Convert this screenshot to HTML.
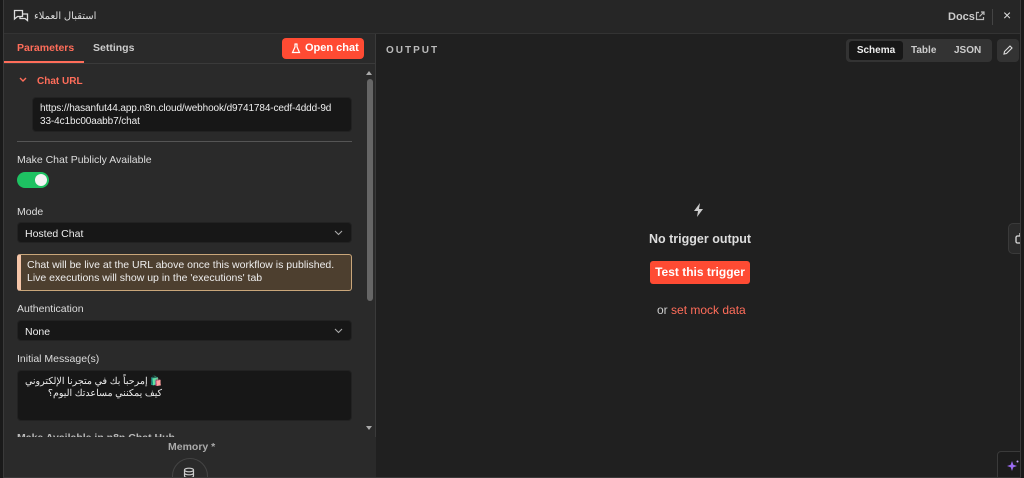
<!DOCTYPE html>
<html><head><meta charset="utf-8"><style>
*{box-sizing:border-box;margin:0;padding:0}
body{width:1024px;height:478px;overflow:hidden;background:#1a1a1a;font-family:"Liberation Sans","Noto Sans CJK SC",sans-serif;color:#ddd;position:relative;font-size:11px}
.modal{position:absolute;left:3px;top:0;width:1018px;height:478px;border:1px solid #3a3a3a;border-top:none;background:#202020;overflow:hidden}
.hdr{position:absolute;left:0;top:0;width:100%;height:34px;background:#262626;border-bottom:1px solid #333}
.left{position:absolute;left:0;top:34px;width:372px;height:444px;background:#2a2a2a;border-right:1px solid #3a3a3a}
.abs{position:absolute}
.lbl{position:absolute;left:13px;font-size:10.5px;color:#ddd}
.inp{position:absolute;left:13px;width:335px;background:#171717;border-radius:4px;border:1px solid #222}
.chev{position:absolute;right:8px;top:7px}
</style></head><body>
<div class="modal">
 <div class="hdr">
  <svg class="abs" style="left:9px;top:9px" width="16" height="15" viewBox="0 0 16 15" fill="none" stroke="#ddd" stroke-width="1.3"><path d="M1.5 1.5h8v6h-5l-3 2.5z"/><path d="M9.5 5h5v6.5l-2.5-2H7v-2"/></svg>
  <div class="abs" style="left:30px;top:11px;font-size:10px;color:#ddd">استقبال العملاء</div>
  <div class="abs" style="left:944px;top:11px;font-size:11px;color:#ccc;font-weight:bold">Docs</div>
  <svg class="abs" style="left:971px;top:11px" width="10" height="10" viewBox="0 0 10 10" fill="none" stroke="#bbb" stroke-width="1.2"><path d="M4 1.5H1.5v7h7V6M6 1h3v3M9 1L4.5 5.5"/></svg>
  <div class="abs" style="left:988px;top:9px;width:1px;height:16px;background:#444"></div>
  <div class="abs" style="left:999px;top:7px;font-size:14px;color:#ddd">×</div>
 </div>
 <div class="left">
  <div class="abs" style="left:13px;top:8px;font-size:10.5px;color:#ff6d5a;font-weight:bold">Parameters</div>
  <div class="abs" style="left:89px;top:8px;font-size:10.5px;color:#ccc;font-weight:bold">Settings</div>
  <div class="abs" style="left:0;top:27px;width:80px;height:2px;background:#ff6d5a"></div>
  <div class="abs" style="left:0;top:29px;width:372px;height:1px;background:#3a3a3a"></div>
  <div class="abs" style="left:278px;top:4px;width:82px;height:21px;background:#ff4b33;border-radius:4px;color:#fff;font-weight:bold;font-size:11px;line-height:21px;padding-left:23px">Open chat</div>
  <svg class="abs" style="left:287px;top:9px" width="10" height="11" viewBox="0 0 10 11" fill="none" stroke="#fff" stroke-width="1.2"><path d="M3.5 1h3M4 1v3L1.5 9.5h7L6 4V1"/></svg>
  <svg class="abs" style="left:15px;top:43px" width="8" height="6" viewBox="0 0 8 6" fill="none" stroke="#ff6d5a" stroke-width="1.4"><path d="M1 1l3 3 3-3"/></svg>
  <div class="abs" style="left:33px;top:42px;color:#ff6d5a;font-weight:bold;font-size:10px">Chat URL</div>
  <div class="inp" style="left:28px;top:63px;width:320px;height:35px;font-size:10px;color:#eee;padding:4px 7px;line-height:13px;white-space:nowrap;letter-spacing:-0.1px">https://hasanfut44.app.n8n.cloud/webhook/d9741784-cedf-4ddd-9d<br>33-4c1bc00aabb7/chat</div>
  <div class="abs" style="left:13px;top:107px;width:335px;height:1px;background:#555"></div>
  <div class="lbl" style="top:120px">Make Chat Publicly Available</div>
  <div class="abs" style="left:13px;top:138px;width:32px;height:16px;border-radius:8px;background:#1ec262"></div>
  <div class="abs" style="left:31px;top:140px;width:12px;height:12px;border-radius:6px;background:#f4f4f4"></div>
  <div class="lbl" style="top:172px">Mode</div>
  <div class="inp" style="top:188px;height:21px;padding:5px 7px;color:#eee;font-size:10.5px">Hosted Chat<svg class="chev" width="9" height="6" viewBox="0 0 9 6" fill="none" stroke="#aaa" stroke-width="1.1"><path d="M1 1l3.5 3.5L8 1"/></svg></div>
  <div class="abs" style="left:13px;top:220px;width:335px;height:37px;background:#4d3f2f;border:1px solid #c9a67a;border-left:4px solid #f5c5a8;border-radius:3px;padding:4px 6px;color:#eee;font-size:10.5px;line-height:13px">Chat will be live at the URL above once this workflow is published. Live executions will show up in the 'executions' tab</div>
  <div class="lbl" style="top:269px">Authentication</div>
  <div class="inp" style="top:286px;height:21px;padding:5px 7px;color:#eee;font-size:10.5px">None<svg class="chev" width="9" height="6" viewBox="0 0 9 6" fill="none" stroke="#aaa" stroke-width="1.1"><path d="M1 1l3.5 3.5L8 1"/></svg></div>
  <div class="lbl" style="top:319px">Initial Message(s)</div>
  <div class="inp" style="top:336px;height:51px;padding:5px 7px;font-size:9.5px;line-height:12px;color:#eee;font-family:'Liberation Sans','WenQuanYi Zen Hei',sans-serif"><div style="display:inline-block;direction:rtl;text-align:right">🛍️ إمرحباً بك في متجرنا الإلكتروني<br>كيف يمكنني مساعدتك اليوم؟</div></div>
  <div class="lbl" style="top:398px;height:6px;overflow:hidden;color:#bbb;font-weight:bold">Make Available in n8n Chat Hub</div>
  <div class="abs" style="left:0;top:403px;width:372px;height:41px;background:#2a2a2a"></div>
  <div class="abs" style="left:164px;top:407px;color:#aaa;font-weight:bold;font-size:10.5px">Memory *</div>
  <div class="abs" style="left:168px;top:424px;width:36px;height:36px;border-radius:18px;border:1px solid #444;background:#2a2a2a"></div>
  <svg class="abs" style="left:179px;top:433px" width="12" height="12" viewBox="0 0 12 12" fill="none" stroke="#ccc" stroke-width="1.2"><ellipse cx="6" cy="3" rx="4.5" ry="1.8"/><path d="M1.5 3v6c0 1 2 1.8 4.5 1.8s4.5-.8 4.5-1.8V3M1.5 6c0 1 2 1.8 4.5 1.8s4.5-.8 4.5-1.8"/></svg>
  <div class="abs" style="left:362px;top:34px;width:0;height:0;border:3px solid transparent;border-bottom:4px solid #aaa"></div>
  <div class="abs" style="left:363px;top:45px;width:6px;height:222px;background:#666;border-radius:3px"></div>
  <div class="abs" style="left:362px;top:392px;width:0;height:0;border:3px solid transparent;border-top:4px solid #aaa"></div>
 </div>
 <div class="abs" style="left:382px;top:45px;font-size:10px;color:#bbb;letter-spacing:2px;font-weight:bold">OUTPUT</div>
 <div class="abs" style="left:842px;top:39px;width:146px;height:23px;background:#333;border-radius:4px"></div>
 <div class="abs" style="left:845px;top:41px;width:54px;height:19px;background:#171717;border-radius:3px;color:#eee;font-weight:bold;font-size:10px;line-height:19px;text-align:center">Schema</div>
 <div class="abs" style="left:907px;top:45px;color:#ccc;font-weight:bold;font-size:10px">Table</div>
 <div class="abs" style="left:950px;top:45px;color:#ccc;font-weight:bold;font-size:10px">JSON</div>
 <div class="abs" style="left:993px;top:39px;width:22px;height:23px;background:#333;border-radius:4px"></div>
 <svg class="abs" style="left:999px;top:45px" width="10" height="10" viewBox="0 0 10 10" fill="none" stroke="#ddd" stroke-width="1.1"><path d="M1 9l.5-2.5L7 1l2 2-5.5 5.5z"/></svg>
 <svg class="abs" style="left:689px;top:203px" width="12" height="14" viewBox="0 0 12 14"><path d="M7 0L1 8h4l-1 6 6-8H6z" fill="#ccc"/></svg>
 <div class="abs" style="left:645px;top:232px;font-size:12.5px;font-weight:bold;color:#ddd">No trigger output</div>
 <div class="abs" style="left:646px;top:261px;width:100px;height:23px;background:#ff4b33;border-radius:3px;color:#fff;font-weight:bold;font-size:12px;line-height:23px;text-align:center">Test this trigger</div>
 <div class="abs" style="left:653px;top:303px;font-size:12px;color:#ccc">or <span style="color:#ff6d5a">set mock data</span></div>
 <div class="abs" style="left:1004px;top:223px;width:20px;height:31px;background:#2a2a2a;border:1px solid #3a3a3a;border-radius:5px 0 0 5px"></div>
 <svg class="abs" style="left:1011px;top:232px" width="10" height="12" viewBox="0 0 10 12" fill="none" stroke="#ddd" stroke-width="1.3"><rect x="1" y="4" width="9" height="7" rx="1.5"/><path d="M5 1v3"/></svg>
 <div class="abs" style="left:993px;top:451px;width:30px;height:30px;background:#1c1c1c;border:1px solid #3a3a3a;border-radius:4px 0 0 0"></div>
 <svg class="abs" style="left:1002px;top:459px" width="14" height="14" viewBox="0 0 14 14"><path d="M6 2l1.3 3.7L11 7l-3.7 1.3L6 12 4.7 8.3 1 7l3.7-1.3z" fill="#9b6cf2"/><circle cx="11.5" cy="2.5" r="1" fill="#c9a5ff"/></svg>
</div>
</body></html>
